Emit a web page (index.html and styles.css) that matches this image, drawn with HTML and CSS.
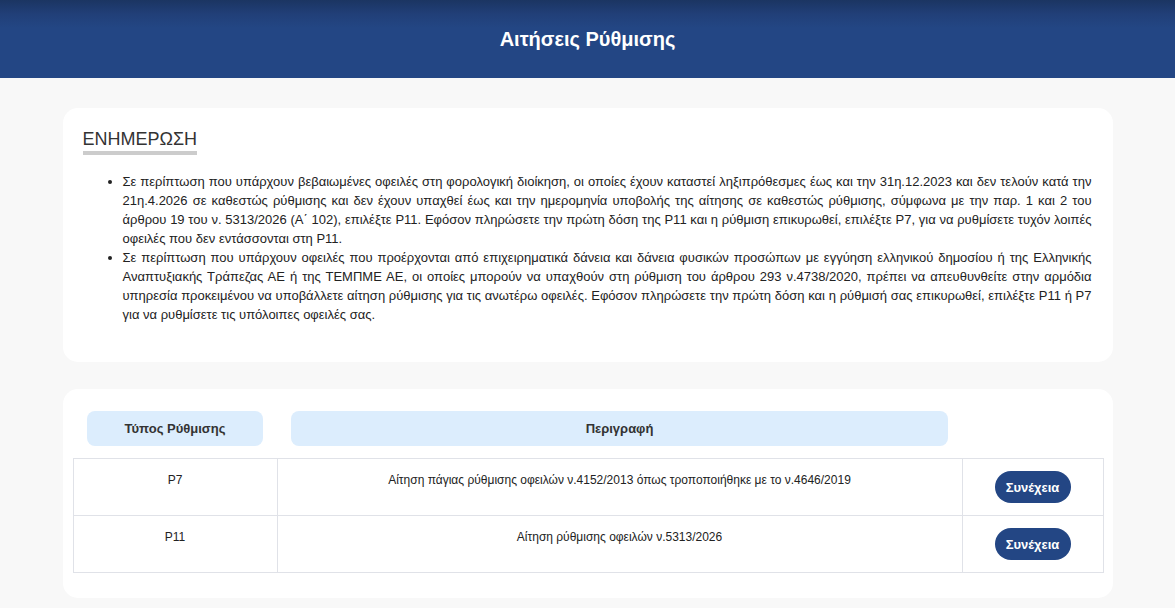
FILE: index.html
```html
<!DOCTYPE html>
<html lang="el">
<head>
<meta charset="utf-8">
<title>Αιτήσεις Ρύθμισης</title>
<link rel="stylesheet" href="styles.css">
</head>
<body>
<header class="topbar">
  <h1 class="topbar-title">Αιτήσεις Ρύθμισης</h1>
</header>
<main class="container">
  <section class="card info-card">
    <h2 class="info-title">ΕΝΗΜΕΡΩΣΗ</h2>
    <ul class="info-list">
      <li>Σε περίπτωση που υπάρχουν βεβαιωμένες οφειλές στη φορολογική διοίκηση, οι οποίες έχουν καταστεί ληξιπρόθεσμες έως και την 31η.12.2023 και δεν τελούν κατά την 21η.4.2026 σε καθεστώς ρύθμισης και δεν έχουν υπαχθεί έως και την ημερομηνία υποβολής της αίτησης σε καθεστώς ρύθμισης, σύμφωνα με την παρ. 1 και 2 του άρθρου 19 του ν. 5313/2026 (Α΄ 102), επιλέξτε Ρ11. Εφόσον πληρώσετε την πρώτη δόση της Ρ11 και η ρύθμιση επικυρωθεί, επιλέξτε Ρ7, για να ρυθμίσετε τυχόν λοιπές οφειλές που δεν εντάσσονται στη Ρ11.</li>
      <li>Σε περίπτωση που υπάρχουν οφειλές που προέρχονται από επιχειρηματικά δάνεια και δάνεια φυσικών προσώπων με εγγύηση ελληνικού δημοσίου ή της Ελληνικής Αναπτυξιακής Τράπεζας ΑΕ ή της ΤΕΜΠΜΕ ΑΕ, οι οποίες μπορούν να υπαχθούν στη ρύθμιση του άρθρου 293 ν.4738/2020, πρέπει να απευθυνθείτε στην αρμόδια υπηρεσία προκειμένου να υποβάλλετε αίτηση ρύθμισης για τις ανωτέρω οφειλές. Εφόσον πληρώσετε την πρώτη δόση και η ρύθμισή σας επικυρωθεί, επιλέξτε Ρ11 ή Ρ7 για να ρυθμίσετε τις υπόλοιπες οφειλές σας.</li>
    </ul>
  </section>
  <section class="card table-card">
    <table class="plans">
      <colgroup>
        <col class="col-type">
        <col class="col-desc">
        <col class="col-action">
      </colgroup>
      <thead>
        <tr>
          <th><div class="pill">Τύπος Ρύθμισης</div></th>
          <th><div class="pill">Περιγραφή</div></th>
          <th></th>
        </tr>
      </thead>
      <tbody>
        <tr>
          <td>Ρ7</td>
          <td>Αίτηση πάγιας ρύθμισης οφειλών ν.4152/2013 όπως τροποποιήθηκε με το ν.4646/2019</td>
          <td class="action"><button class="btn">Συνέχεια</button></td>
        </tr>
        <tr>
          <td>Ρ11</td>
          <td>Αίτηση ρύθμισης οφειλών ν.5313/2026</td>
          <td class="action"><button class="btn">Συνέχεια</button></td>
        </tr>
      </tbody>
    </table>
  </section>
</main>
</body>
</html>
```
FILE: styles.css
```css
* { box-sizing: border-box; }
html, body { margin: 0; padding: 0; }
body {
  background: #f8f8f8;
  font-family: "Liberation Sans", Arial, sans-serif;
  font-size: 13px;
  line-height: 19px;
  color: #222;
  overflow: hidden;
}
.topbar {
  height: 78px;
  background: linear-gradient(to bottom, #1b3562 0%, #213f78 18%, #234684 36%, #234684 100%);
  display: flex;
  align-items: center;
  justify-content: center;
}
.topbar-title {
  margin: 0;
  color: #fff;
  font-size: 20px;
  font-weight: bold;
  line-height: 24px;
}
.container {
  width: 1050px;
  margin: 30px auto 0;
  display: flex;
  flex-direction: column;
  gap: 27px;
}
.card {
  background: #fff;
  border-radius: 15px;
}
.info-card {
  padding: 20px 20px 28px;
  height: 254px;
}
.info-title {
  display: inline-block;
  margin: 0;
  font-size: 18px;
  font-weight: normal;
  line-height: 22px;
  color: #333;
  padding-bottom: 1px;
  border-bottom: 4px solid #cccccc;
}
.info-list {
  margin: 17px 0 0;
  padding-left: 40px;
  padding-right: 1px;
  text-align: justify;
}
.table-card {
  padding: 22px 10px 25px;
}
.plans {
  width: 100%;
  border-collapse: collapse;
  table-layout: fixed;
}
.col-type { width: 204px; }
.col-desc { width: 685px; }
.col-action { width: 141px; }
.plans th {
  padding: 0 14px 12px;
  font-weight: bold;
}
.pill {
  height: 35px;
  background: #dcedfd;
  border-radius: 8px;
  display: flex;
  align-items: center;
  justify-content: center;
  color: #333;
  font-size: 13px;
}
.plans td {
  border: 1px solid #e0e2e8;
  padding: 12px;
  text-align: center;
  vertical-align: top;
  font-size: 12px;
  line-height: 19px;
  color: #222;
}
.plans td.action {
  vertical-align: middle;
}
.btn {
  width: 76px;
  height: 32px;
  border: none;
  border-radius: 16px;
  background: #234684;
  color: #fff;
  font-family: "Liberation Sans", Arial, sans-serif;
  font-size: 13px;
  font-weight: bold;
  cursor: pointer;
  padding: 0;
}
```
